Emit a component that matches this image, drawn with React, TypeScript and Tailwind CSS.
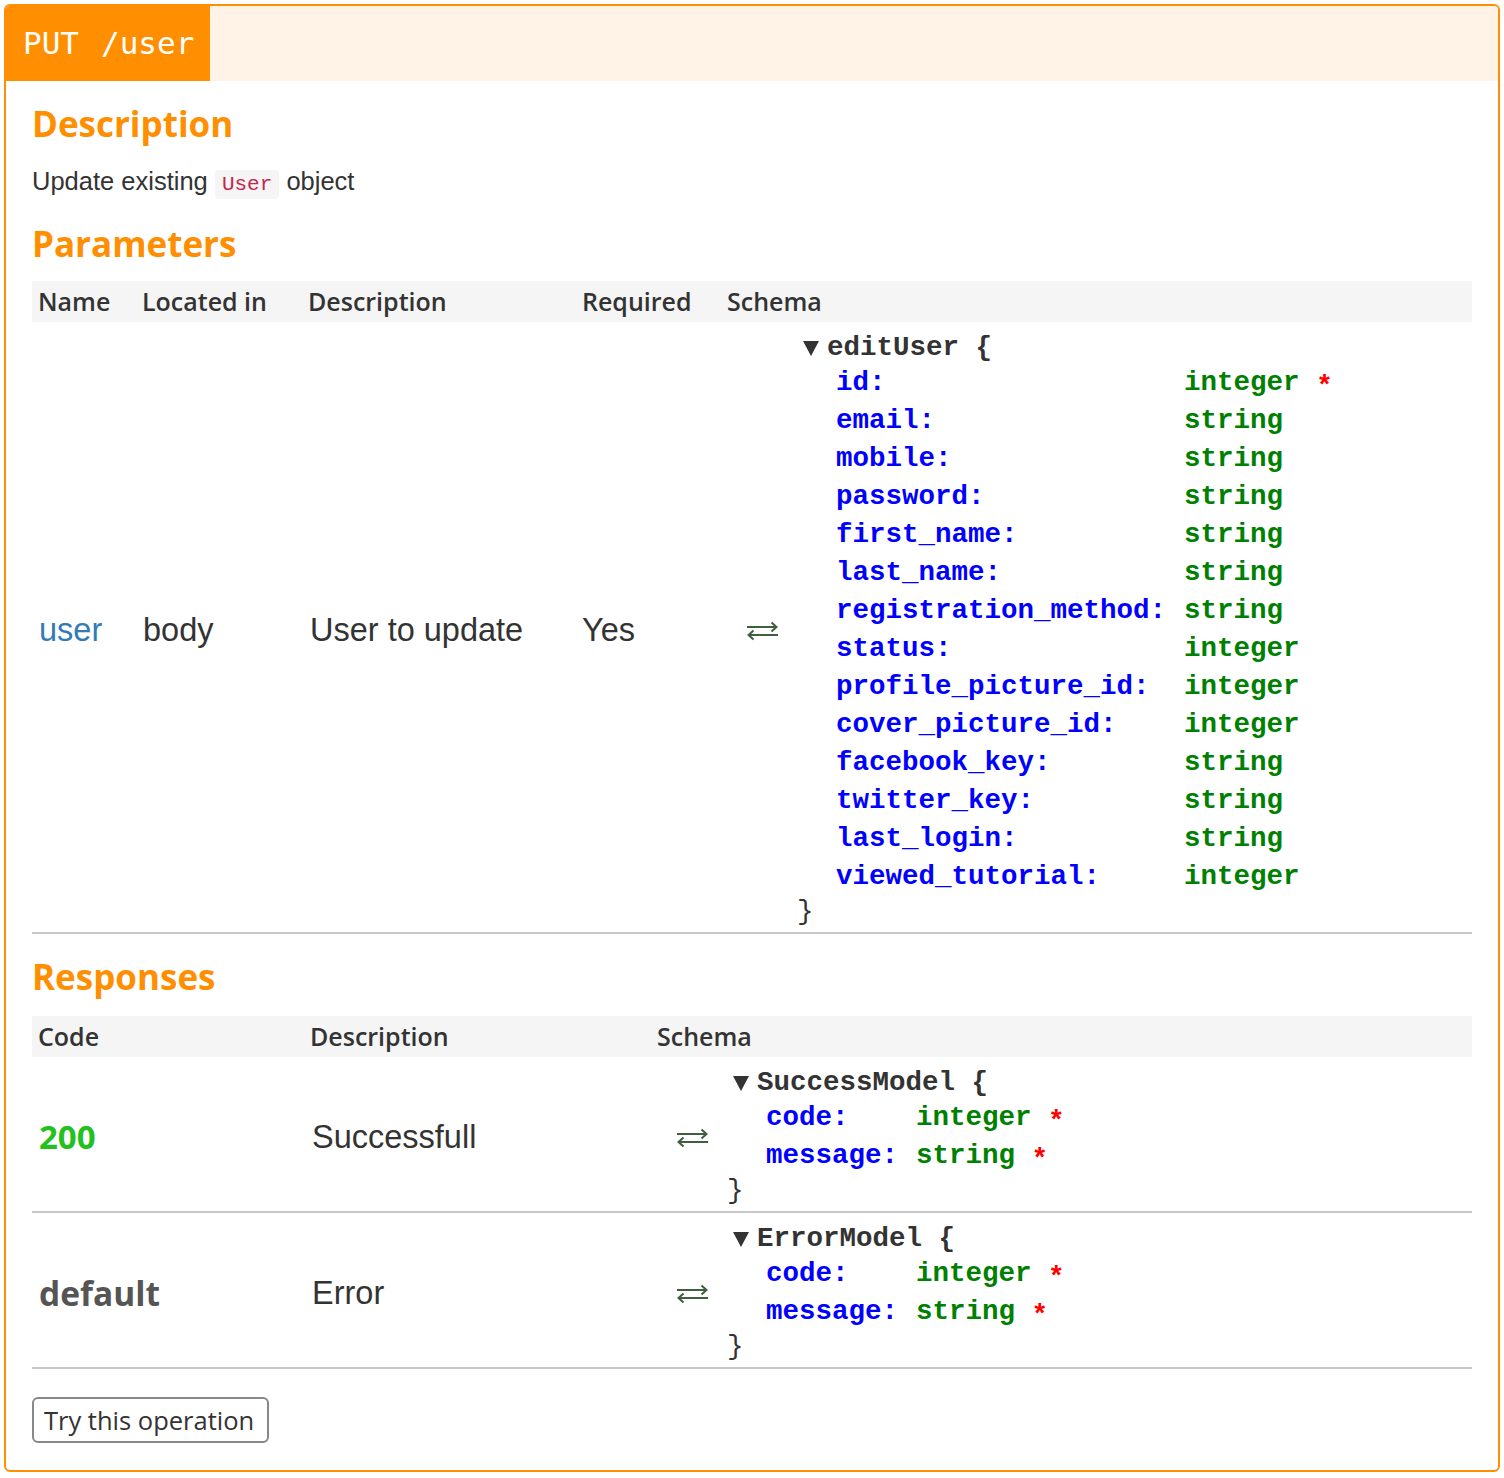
import React from 'react';

type Prop = { name: string; type: string; required?: boolean };

const editUser: Prop[] = [
  { name: 'id', type: 'integer', required: true },
  { name: 'email', type: 'string' },
  { name: 'mobile', type: 'string' },
  { name: 'password', type: 'string' },
  { name: 'first_name', type: 'string' },
  { name: 'last_name', type: 'string' },
  { name: 'registration_method', type: 'string' },
  { name: 'status', type: 'integer' },
  { name: 'profile_picture_id', type: 'integer' },
  { name: 'cover_picture_id', type: 'integer' },
  { name: 'facebook_key', type: 'string' },
  { name: 'twitter_key', type: 'string' },
  { name: 'last_login', type: 'string' },
  { name: 'viewed_tutorial', type: 'integer' }
];

const modelProps: Prop[] = [
  { name: 'code', type: 'integer', required: true },
  { name: 'message', type: 'string', required: true }
];

function SwapArrow() {
  return (
    <svg width="31" height="22" viewBox="0 0 31 22" fill="none" stroke="#3f5f3f" strokeWidth="2" className="shrink-0">
      <path d="M0 8H29M24.5 3.5L29.5 8L24.5 12.5" />
      <path d="M31 16H2M6.5 11.5L1.5 16L6.5 20.5" />
    </svg>
  );
}

function Triangle() {
  return (
    <svg width="16" height="16" viewBox="0 0 16 16" className="shrink-0">
      <path d="M0 1H16L8 16Z" fill="#333" />
    </svg>
  );
}

function Schema({ title, props }: { title: string; props: Prop[] }) {
  return (
    <div className="font-['Liberation_Mono',monospace] text-[27.5px]">
      <div className="flex h-[32px] items-center pl-[6px] font-bold text-[#333]">
        <Triangle />
        <span className="ml-[8px] whitespace-pre leading-[32px]">{title} {'{'}</span>
      </div>
      <div className="grid grid-cols-[auto_auto] justify-start gap-x-[18px] pl-[39px] font-bold leading-[38px]">
        {props.map((p) => (
          <React.Fragment key={p.name}>
            <span className="text-[#0000ff]">{p.name}:</span>
            <span className="whitespace-pre text-[#008000]">
              {p.type}
              {p.required && (
                <>
                  {' '}
                  <span className="inline-block translate-y-[4px] text-[#ff0000]">*</span>
                </>
              )}
            </span>
          </React.Fragment>
        ))}
      </div>
      <div className="h-[32px] leading-[32px] text-[#333]">{'}'}</div>
    </div>
  );
}

function SchemaCell({ title, props }: { title: string; props: Prop[] }) {
  return (
    <div className="flex flex-1 items-center pl-[26px]">
      <SwapArrow />
      <div className="ml-[19px]">
        <Schema title={title} props={props} />
      </div>
    </div>
  );
}

function Heading({ children }: { children: React.ReactNode }) {
  return (
    <h2 className="mt-[21px] font-['Open_Sans',sans-serif] text-[35px] font-bold leading-[43px] text-[#ff8f00]">
      {children}
    </h2>
  );
}

export default function App() {
  return (
    <div className="min-h-[1478px] bg-white p-1">
      <div className="overflow-hidden rounded-[6px] border-2 border-[#ff8f00]">
        <div className="flex h-[75px] bg-[#fef3e6]">
          <div className="flex items-center gap-[22px] bg-[#ff8f00] pl-[17px] pr-[16px] font-['DejaVu_Sans_Mono',monospace] text-[31px] text-white">
            <span>PUT</span>
            <span>/user</span>
          </div>
        </div>

        <div className="px-[26px] pb-[27px] text-[#333]">
          <Heading>Description</Heading>
          <p className="mt-[20px] font-['Liberation_Sans',sans-serif] text-[25.5px] leading-[32px]">
            Update existing{' '}
            <code className="rounded-[4px] bg-[#f5f5f5] px-[7px] py-[3px] font-['Liberation_Mono',monospace] text-[21px] text-[#c7254e]">
              User
            </code>{' '}
            object
          </p>

          <Heading>Parameters</Heading>
          <div className="mt-[16px]">
            <div className="flex h-[41px] items-center bg-[#f5f5f5] font-['Open_Sans',sans-serif] text-[25px] font-semibold">
              <div className="w-[104px] pl-[6px]">Name</div>
              <div className="w-[166px] pl-[6px]">Located in</div>
              <div className="w-[274px] pl-[6px]">Description</div>
              <div className="w-[145px] pl-[6px]">Required</div>
              <div className="flex-1 pl-[6px]">Schema</div>
            </div>
            <div className="flex items-center border-b-2 border-[#c8c8c8] pt-[10px] pb-[4px] font-['Liberation_Sans',sans-serif] text-[32.5px]">
              <div className="w-[104px] pl-[7px] text-[#337ab7]">user</div>
              <div className="w-[166px] pl-[7px]">body</div>
              <div className="w-[274px] pl-[8px]">User to update</div>
              <div className="w-[145px] pl-[6px]">Yes</div>
              <SchemaCell title="editUser" props={editUser} />
            </div>
          </div>

          <Heading>Responses</Heading>
          <div className="mt-[18px]">
            <div className="flex h-[41px] items-center bg-[#f5f5f5] font-['Open_Sans',sans-serif] text-[25px] font-semibold">
              <div className="w-[272px] pl-[6px]">Code</div>
              <div className="w-[347px] pl-[6px]">Description</div>
              <div className="flex-1 pl-[6px]">Schema</div>
            </div>
            <div className="flex items-center border-b-2 border-[#c8c8c8] pt-[10px] pb-[4px] text-[32.5px]">
              <div className="w-[272px] pl-[7px] font-['Open_Sans',sans-serif] text-[33px] font-bold text-[#22c11d]">200</div>
              <div className="w-[347px] pl-[8px] font-['Liberation_Sans',sans-serif]">Successfull</div>
              <SchemaCell title="SuccessModel" props={modelProps} />
            </div>
            <div className="flex items-center border-b-2 border-[#c8c8c8] pt-[10px] pb-[4px] text-[32.5px]">
              <div className="w-[272px] pl-[7px] font-['Open_Sans',sans-serif] text-[33.5px] font-bold text-[#555]">default</div>
              <div className="w-[347px] pl-[8px] font-['Liberation_Sans',sans-serif]">Error</div>
              <SchemaCell title="ErrorModel" props={modelProps} />
            </div>
          </div>

          <button className="mt-[28px] h-[46px] rounded-[6px] border-2 border-[#888] bg-white pl-[10px] pr-[13px] font-['Open_Sans',sans-serif] text-[25.5px] text-[#333]">
            Try this operation
          </button>
        </div>
      </div>
    </div>
  );
}
